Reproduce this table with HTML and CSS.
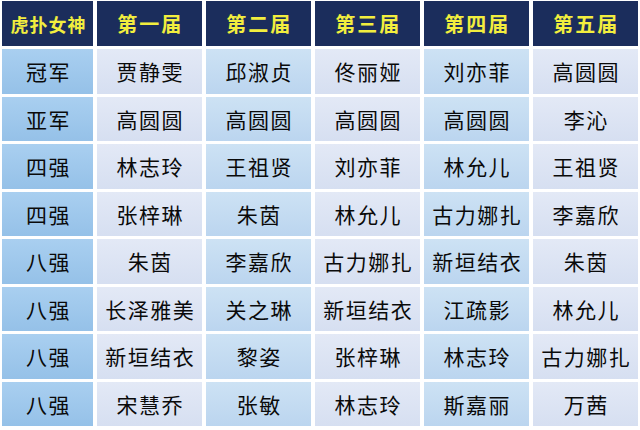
FILE: index.html
```html
<!DOCTYPE html>
<html lang="zh">
<head>
<meta charset="utf-8">
<link rel="stylesheet" href="styles.css">
</head>
<body>
<div class="table">
  <div class="cell head first">虎扑女神</div>
  <div class="cell head">第一届</div>
  <div class="cell head">第二届</div>
  <div class="cell head">第三届</div>
  <div class="cell head">第四届</div>
  <div class="cell head">第五届</div>

  <div class="cell label">冠军</div>
  <div class="cell pale">贾静雯</div>
  <div class="cell blue">邱淑贞</div>
  <div class="cell pale">佟丽娅</div>
  <div class="cell blue">刘亦菲</div>
  <div class="cell pale">高圆圆</div>

  <div class="cell label">亚军</div>
  <div class="cell pale">高圆圆</div>
  <div class="cell blue">高圆圆</div>
  <div class="cell pale">高圆圆</div>
  <div class="cell blue">高圆圆</div>
  <div class="cell pale">李沁</div>

  <div class="cell label">四强</div>
  <div class="cell pale">林志玲</div>
  <div class="cell blue">王祖贤</div>
  <div class="cell pale">刘亦菲</div>
  <div class="cell blue">林允儿</div>
  <div class="cell pale">王祖贤</div>

  <div class="cell label">四强</div>
  <div class="cell pale">张梓琳</div>
  <div class="cell blue">朱茵</div>
  <div class="cell pale">林允儿</div>
  <div class="cell blue">古力娜扎</div>
  <div class="cell pale">李嘉欣</div>

  <div class="cell label">八强</div>
  <div class="cell pale">朱茵</div>
  <div class="cell blue">李嘉欣</div>
  <div class="cell pale">古力娜扎</div>
  <div class="cell blue">新垣结衣</div>
  <div class="cell pale">朱茵</div>

  <div class="cell label">八强</div>
  <div class="cell pale">长泽雅美</div>
  <div class="cell blue">关之琳</div>
  <div class="cell pale">新垣结衣</div>
  <div class="cell blue">江疏影</div>
  <div class="cell pale">林允儿</div>

  <div class="cell label">八强</div>
  <div class="cell pale">新垣结衣</div>
  <div class="cell blue">黎姿</div>
  <div class="cell pale">张梓琳</div>
  <div class="cell blue">林志玲</div>
  <div class="cell pale">古力娜扎</div>

  <div class="cell label">八强</div>
  <div class="cell pale">宋慧乔</div>
  <div class="cell blue">张敏</div>
  <div class="cell pale">林志玲</div>
  <div class="cell blue">斯嘉丽</div>
  <div class="cell pale">万茜</div>
</div>
</body>
</html>
```

FILE: styles.css
```css
html, body {
  margin: 0;
  padding: 0;
  background: #ffffff;
}

body {
  width: 640px;
  height: 430px;
  overflow: hidden;
  padding: 1px 0 0 2px;
  box-sizing: border-box;
  font-family: "Noto Sans CJK SC", "Noto Sans", sans-serif;
}

.table {
  width: 636px;
  display: grid;
  grid-template-columns: 91px repeat(5, 1fr);
  grid-template-rows: 45px repeat(8, 44.5px);
  gap: 3px 3.5px;
}

.cell {
  display: flex;
  align-items: center;
  justify-content: center;
  font-size: 21px;
  font-weight: 400;
  letter-spacing: 1.5px;
  color: #0a0a0a;
  padding-left: 2px;
}

.head {
  background: #1b2d5c;
  color: #f2ee3e;
  font-weight: 700;
  font-size: 20px;
  letter-spacing: 2px;
}

.head.first {
  font-size: 18px;
  letter-spacing: 1px;
}

.label {
  background: linear-gradient(180deg, #a9cff0 0%, #95c1e8 100%);
}

.pale {
  background: linear-gradient(180deg, #e3e9f6 0%, #d6dff1 100%);
}

.blue {
  background: linear-gradient(180deg, #cde2f4 0%, #bbd5ef 100%);
}
```
